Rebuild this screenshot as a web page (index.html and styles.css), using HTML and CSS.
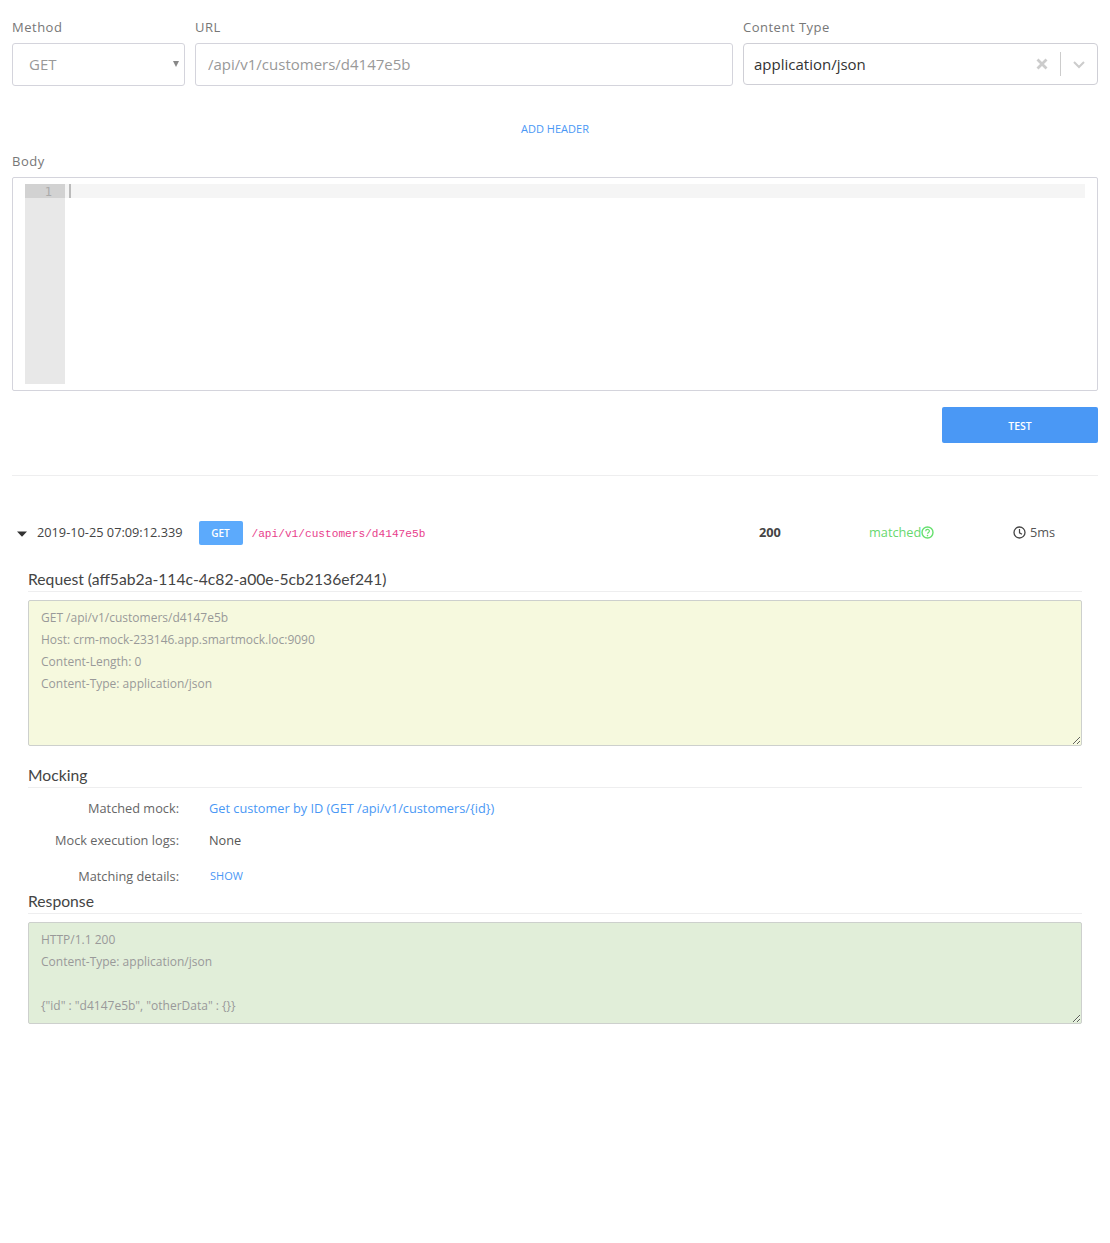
FILE: index.html
```html
<!DOCTYPE html>
<html lang="en">
<head>
<meta charset="utf-8">
<title>Endpoint test</title>
<link rel="stylesheet" href="styles.css">
</head>
<body>
<main class="page">
  <form class="form-row">
    <div class="field field-method">
      <label class="field-label">Method</label>
      <div class="select-box"><span class="select-value">GET</span><span class="select-arrow"></span></div>
    </div>
    <div class="field field-url">
      <label class="field-label">URL</label>
      <input class="text-input" type="text" value="/api/v1/customers/d4147e5b" readonly>
    </div>
    <div class="field field-type">
      <label class="field-label">Content Type</label>
      <div class="combo">
        <span class="combo-value">application/json</span>
        <svg class="combo-clear" width="20" height="20" viewBox="0 0 20 20"><path d="M5.5 5.500l9 9M14.500 5.500l-9 9" stroke="#cccccc" stroke-width="2.800" fill="none"/></svg>
        <span class="combo-sep"></span>
        <svg class="combo-chevron" width="20" height="20" viewBox="0 0 20 20"><path d="M5 8l5 5 5-5" stroke="#cccccc" stroke-width="2" fill="none"/></svg>
      </div>
    </div>
  </form>

  <div class="add-header"><a class="link-small">ADD HEADER</a></div>

  <label class="field-label">Body</label>
  <div class="editor">
    <div class="gutter"><div class="gutter-active">1</div></div>
    <div class="editor-lines"><div class="active-line"><span class="cursor"></span></div></div>
  </div>

  <div class="actions"><button class="btn-test" type="button">TEST</button></div>
  <hr class="rule">

  <section class="log-row">
    <svg class="caret" width="10" height="6" viewBox="0 0 10 6"><path d="M0 .5h10L5 5.800z" fill="#333"/></svg>
    <span class="timestamp">2019-10-25 07:09:12.339</span>
    <span class="badge">GET</span>
    <code class="path">/api/v1/customers/d4147e5b</code>
    <span class="status">200</span>
    <span class="matched">matched<svg width="13" height="13" viewBox="0 0 13 13"><circle cx="6.500" cy="6.500" r="5.500" fill="none" stroke="#67e06f" stroke-width="1.400"/><path d="M4.700 5.200c0-2.300 3.700-2.300 3.700-.1 0 1.300-1.800 1.300-1.800 2.600" fill="none" stroke="#67e06f" stroke-width="1.200"/><circle cx="6.500" cy="9.600" r=".8" fill="#67e06f"/></svg></span>
    <span class="duration"><svg width="13" height="13" viewBox="0 0 13 13"><circle cx="6.500" cy="6.500" r="5.500" fill="none" stroke="#444" stroke-width="1.300"/><path d="M6.500 3v3.800l2.500 1.400" fill="none" stroke="#444" stroke-width="1.200"/></svg>5ms</span>
  </section>

  <section class="details">
    <h3 class="section-title title-request">Request (aff5ab2a-114c-4c82-a00e-5cb2136ef241)</h3>
    <textarea class="http-box box-request" readonly>GET /api/v1/customers/d4147e5b
Host: crm-mock-233146.app.smartmock.loc:9090
Content-Length: 0
Content-Type: application/json</textarea>

    <h3 class="section-title title-mocking">Mocking</h3>
    <div class="info-row row-mock"><span class="info-label">Matched mock:</span><a class="info-link">Get customer by ID (GET /api/v1/customers/{id})</a></div>
    <div class="info-row row-logs"><span class="info-label">Mock execution logs:</span><span class="info-value">None</span></div>
    <div class="info-row row-details"><span class="info-label">Matching details:</span><a class="link-small show-link">SHOW</a></div>

    <h3 class="section-title title-response">Response</h3>
    <textarea class="http-box box-response" readonly>HTTP/1.1 200
Content-Type: application/json

{"id" : "d4147e5b", "otherData" : {}}</textarea>
  </section>
</main>
</body>
</html>
```
FILE: styles.css
```css
* { box-sizing: border-box; }
html, body { margin: 0; background: #fff; }
body { font-family: "Open Sans", "Liberation Sans", sans-serif; color: #444; height: 1243px; overflow: hidden; }
.page { padding: 0 12px; }

.form-row { display: flex; gap: 10px; padding-top: 18px; }
.field-method { flex: 0 0 173px; }
.field-url { flex: 1 1 auto; }
.field-type { flex: 0 0 355px; }
.field-label { display: block; height: 25px; font-size: 13px; line-height: 19px; letter-spacing: .5px; color: #777; }

.select-box { position: relative; height: 43px; border: 1px solid #d4d4dc; border-radius: 3px; padding: 0 16px 2px; display: flex; align-items: center; }
.select-value { font-size: 15px; color: #999; }
.select-arrow { position: absolute; right: 5px; top: 17px; border-left: 3px solid transparent; border-right: 3px solid transparent; border-top: 6px solid #888; }
.text-input { display: block; width: 100%; height: 43px; border: 1px solid #d4d4dc; border-radius: 3px; padding: 0 12px 2px; font: 15px "Open Sans", sans-serif; color: #999; outline: none; }
.combo { display: flex; align-items: center; height: 42px; border: 1px solid #cfcfd6; border-radius: 4px; padding: 0 8px 0 10px; }
.combo-value { flex: 1; font-size: 15px; color: #333; }
.combo-sep { width: 1px; height: 24px; background: #ccc; margin: 0 8px 0 8px; }
.combo-clear, .combo-chevron { display: block; }

.link-small { font-size: 11px; color: #4a98f5; text-decoration: none; }
.add-header { text-align: center; height: 66px; padding-top: 32px; line-height: 18px; }

.editor { display: flex; height: 214px; border: 1px solid #d4d4dc; border-radius: 2px; padding: 6px 12px; }
.gutter { flex: 0 0 40px; background: #e8e8e8; }
.gutter-active { height: 14px; background: #d2d2d2; color: #aaa; font: 12px/16px "DejaVu Sans Mono", monospace; text-align: right; padding-right: 13px; }
.editor-lines { flex: 1; }
.active-line { height: 14px; background: #f5f5f5; padding-left: 4px; }
.cursor { display: block; width: 2px; height: 14px; background: #bbb; }

.actions { display: flex; justify-content: flex-end; padding-top: 16px; }
.btn-test { width: 156px; height: 36px; padding: 2px 0 0; border: 0; border-radius: 2px; background: #4a98f5; color: #fff; font: 600 10.5px "Open Sans", sans-serif; }
.rule { border: 0; border-top: 1px solid #eeeeef; margin: 32px 0 0; }

.log-row { position: relative; display: flex; align-items: center; height: 24px; margin-top: 45px; font-size: 12.75px; }
.caret { margin-left: 5px; margin-top: 2px; }
.timestamp { margin: 0 0 2px 10px; color: #444; }
.badge { margin-left: 16px; width: 44px; height: 24px; line-height: 24px; text-align: center; background: #5caafc; color: #fff; border-radius: 2px; font-size: 10px; font-weight: 600; }
.path { margin: 2px 0 0 9px; font: 11.15px "Liberation Mono", monospace; color: #e83e8c; }
.status { position: absolute; left: 747px; margin-bottom: 2px; font-weight: 700; color: #444; }
.matched { position: absolute; left: 857px; margin-bottom: 2px; display: flex; align-items: center; color: #67d86f; }
.duration { position: absolute; left: 1001px; margin-bottom: 2px; display: flex; align-items: center; gap: 4px; color: #555; }

.details { padding: 0 16px; }
.section-title { margin: 0; font: 400 15.7px/23px Lato, sans-serif; color: #444; border-bottom: 1px solid #eeeeef; }
.title-request { margin-top: 23px; height: 24px; }
.title-mocking { margin-top: 18px; height: 24px; }
.title-response { margin-top: 5px; height: 24px; }
.http-box { display: block; width: 100%; margin-top: 8px; padding: 6px 12px; border: 1px solid #cdd0cd; border-radius: 2px; font: 12px/22px "Open Sans", sans-serif; color: #999; outline: none; overflow: hidden; }
.box-request { height: 146px; background: #f6f9de; }
.box-response { height: 102px; background: #e1eed9; }

.info-row { display: flex; align-items: center; font-size: 12.75px; }
.info-label { width: 151px; text-align: right; color: #666; margin-right: 30px; }
.info-link { color: #4a98f5; }
.info-value { color: #555; }
.row-mock { height: 32px; margin-top: 4px; }
.row-logs { height: 32px; }
.row-details { height: 18px; margin-top: 11px; }
.show-link { font-size: 11px; margin-top: -2px; margin-left: 1px; }
```
